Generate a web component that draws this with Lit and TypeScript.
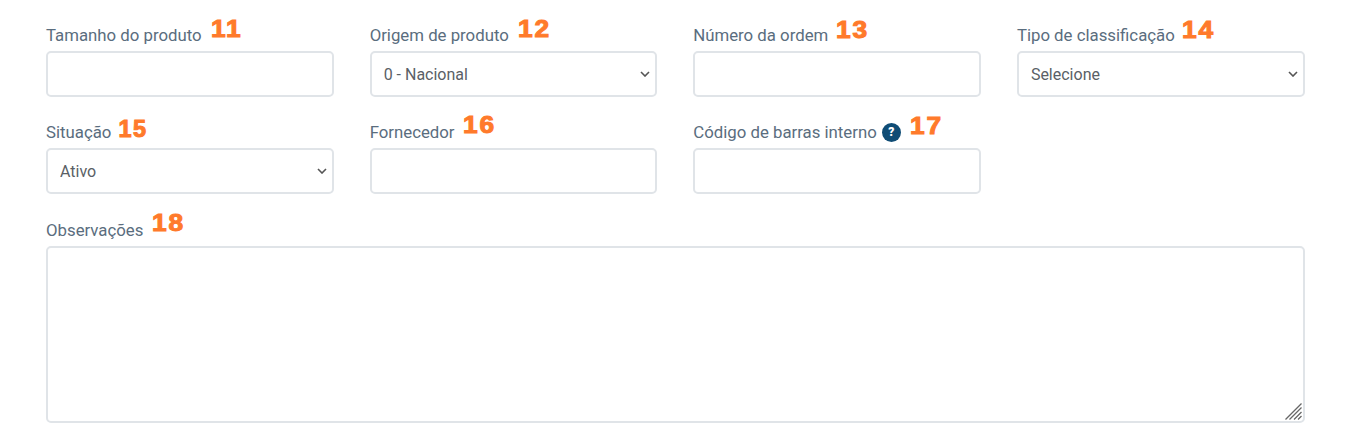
import { LitElement, html, css } from "lit";
import { customElement } from "lit/decorators.js";

type Field = { label: string; n: string; nx: number; ny: number; options?: string[]; help?: boolean };

const fields: Field[] = [
  { label: "Tamanho do produto", n: "11", nx: 9, ny: -6 },
  { label: "Origem de produto", n: "12", nx: 9, ny: -6, options: ["0 - Nacional"] },
  { label: "Número da ordem", n: "13", nx: 8, ny: -5 },
  { label: "Tipo de classificação", n: "14", nx: 7, ny: -5, options: ["Selecione"] },
  { label: "Situação", n: "15", nx: 7, ny: -3, options: ["Ativo"] },
  { label: "Fornecedor", n: "16", nx: 8, ny: -7 },
  { label: "Código de barras interno", n: "17", nx: 9, ny: -6, help: true },
];

@customElement("app-root")
export class AppRoot extends LitElement {
  static styles = css`
    :host {
      display: block;
      width: 1347px;
      height: 430px;
      background: #fff;
      overflow: hidden;
      font-family: Roboto, "Liberation Sans", sans-serif;
    }
    .form {
      box-sizing: border-box;
      padding: 23px 42.5px 0 46px;
      display: grid;
      grid-template-columns: repeat(4, 1fr);
      column-gap: 36px;
      row-gap: 23px;
    }
    .field {
      display: flex;
      flex-direction: column;
      min-width: 0;
    }
    .full {
      grid-column: 1 / -1;
      grid-row: 3;
      margin-top: 1px;
    }
    .label {
      display: flex;
      align-items: center;
      height: 24px;
      margin-bottom: 4px;
      font-size: 16.8px;
      line-height: 24px;
      color: #5a6d7e;
    }
    .num {
      position: relative;
      font-family: "Liberation Sans", Arial, sans-serif;
      font-weight: 700;
      font-size: 23.5px;
      line-height: 22px;
      letter-spacing: 1.6px;
      color: #ff7a2b;
      -webkit-text-stroke: 1px #ff7a2b;
      transform: scaleX(1.12);
      transform-origin: left center;
    }
    .num.narrow {
      transform: none;
    }
    .help {
      width: 19px;
      height: 19px;
      margin-left: 5px;
      flex: none;
      border-radius: 50%;
      background: #0f4c75;
      color: #fff;
      font-size: 12px;
      font-weight: 900;
      line-height: 19px;
      text-align: center;
    }
    .control {
      position: relative;
    }
    input,
    select,
    textarea {
      box-sizing: border-box;
      width: 100%;
      margin: 0;
      display: block;
      border: 2px solid #e0e4e8;
      border-radius: 5px;
      background: #fff;
      outline: none;
      font-family: inherit;
      font-size: 16px;
      color: #5a5f66;
    }
    input,
    select {
      height: 46px;
      padding: 0 12px;
    }
    select {
      appearance: none;
      -webkit-appearance: none;
    }
    textarea {
      height: 177px;
      padding: 12px;
      resize: none;
    }
    .chevron {
      position: absolute;
      right: 7px;
      top: 50%;
      width: 10px;
      height: 6px;
      margin-top: -3px;
      pointer-events: none;
    }
    .grip {
      position: absolute;
      right: 3px;
      bottom: 3px;
      width: 17px;
      height: 17px;
      pointer-events: none;
    }
  `;

  private num(n: string, x: number, y: number) {
    return html`<span class="num ${n === "15" ? "narrow" : ""}" style="left:${x}px;top:${y}px">${n}</span>`;
  }

  render() {
    return html`<div class="form">
      ${fields.map(
        (f) => html`<div class="field">
          <div class="label">
            ${f.label}${f.help ? html`<span class="help">?</span>` : ""}${this.num(f.n, f.nx, f.ny)}
          </div>
          <div class="control">
            ${f.options
              ? html`<select>${f.options.map((o) => html`<option>${o}</option>`)}</select>
                  <svg class="chevron" viewBox="0 0 10 6">
                    <path d="M1 1l4 4 4-4" fill="none" stroke="#555" stroke-width="1.6" />
                  </svg>`
              : html`<input type="text" />`}
          </div>
        </div>`
      )}
      <div class="field full">
        <div class="label">Observações${this.num("18", 9, -7)}</div>
        <div class="control">
          <textarea></textarea>
          <svg class="grip" viewBox="0 0 17 17">
            <path
              d="M0.5 16.5L16.5 0.5M4.5 16.5L16.5 4.5M9 16.5L16.5 9M13 16.5L16.5 13"
              fill="none"
              stroke="#666"
              stroke-width="1.3"
            />
          </svg>
        </div>
      </div>
    </div>`;
  }
}
